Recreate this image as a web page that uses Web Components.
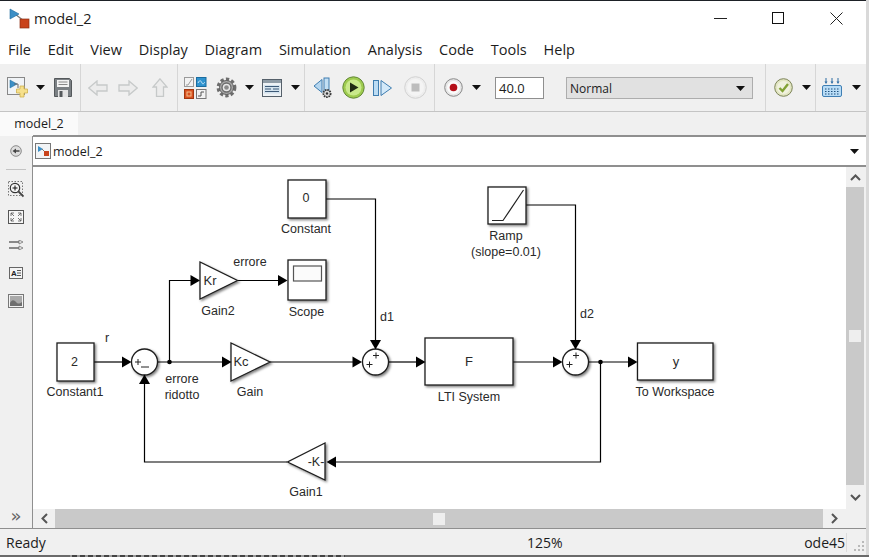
<!DOCTYPE html>
<html lang="en">
<head>
<meta charset="utf-8">
<title>model_2</title>
<style>
  * { box-sizing: border-box; }
  html, body { margin: 0; height: 100%; }
  body { width: 869px; height: 557px; overflow: hidden; background: #d9d9d9; font-family: "Open Sans", "Noto Sans", sans-serif; color: #1c1c1c; }
</style>
</head>
<body>
<sl-window>
  <sl-titlebar title-text="model_2"></sl-titlebar>
  <sl-menubar>
    <span>File</span><span>Edit</span><span>View</span><span>Display</span><span>Diagram</span><span>Simulation</span><span>Analysis</span><span>Code</span><span>Tools</span><span>Help</span>
  </sl-menubar>
  <sl-toolbar>
    <tb-group w="81" pad="4">
      <tb-btn w="26" icon="new"></tb-btn><tb-btn w="20" icon="caret"></tb-btn><tb-btn w="26" icon="save"></tb-btn>
    </tb-group>
    <tb-group w="97" pad="2">
      <tb-btn w="30" icon="back"></tb-btn><tb-btn w="30" icon="fwd"></tb-btn><tb-btn w="34" icon="up"></tb-btn>
    </tb-group>
    <tb-group w="127">
      <tb-btn w="34" icon="library"></tb-btn><tb-btn w="28" icon="gear"></tb-btn><tb-btn w="18" icon="caret"></tb-btn><tb-btn w="28" icon="explorer"></tb-btn><tb-btn w="18" icon="caret"></tb-btn>
    </tb-group>
    <tb-group w="130">
      <tb-btn w="36" icon="stepback"></tb-btn><tb-btn w="24" icon="play"></tb-btn><tb-btn w="36" icon="stepfwd"></tb-btn><tb-btn w="28" icon="stop"></tb-btn>
    </tb-group>
    <tb-group w="331">
      <tb-btn w="36" icon="record"></tb-btn><tb-btn w="10" icon="caret"></tb-btn>
      <tb-field value="40.0"></tb-field>
      <tb-select value="Normal"></tb-select>
    </tb-group>
    <tb-group w="50">
      <tb-btn w="34" icon="check"></tb-btn><tb-btn w="12" icon="caret"></tb-btn>
    </tb-group>
    <tb-group w="50" last>
      <tb-btn w="32" icon="keyboard"></tb-btn><tb-btn w="16" icon="caret"></tb-btn>
    </tb-group>
  </sl-toolbar>
  <sl-tabs label="model_2"></sl-tabs>
  <sl-workspace>
    <sl-palette></sl-palette>
    <sl-editor></sl-editor>
  </sl-workspace>
  <sl-status></sl-status>
</sl-window>
<sl-desktop-strip></sl-desktop-strip>

<script>
  const ICONS = {
    caret: [9, 5, '<path d="M0 0h9L4.500 5z" fill="#111"/>'],
    model: [21, 21, '<path d="M6 6 L15 13" stroke="#777" stroke-width="1.200" fill="none"/><path d="M1 1v10l9-5z" fill="#3c8fc6" stroke="#1f6c9f" stroke-width=".6"/><rect x="11" y="11" width="9" height="9" fill="#c9431b" stroke="#8e2f12" stroke-width=".7"/>'],
    modelsmall: [16, 16, '<rect x=".5" y=".5" width="15" height="15" fill="#f2f4f6" stroke="#777"/><path d="M3 3v6l5-3z" fill="#3c8fc6"/><path d="M7 6l3 3" stroke="#777"/><rect x="9" y="8" width="5" height="5" fill="#c9431b"/>'],
    new: [21, 21, '<rect x=".5" y=".5" width="17" height="17" fill="#f0f3f6" stroke="#888"/><path d="M3 3v8l7-4z" fill="#3c8fc6" stroke="#1f6c9f" stroke-width=".5"/><path d="M7 7h4v4" stroke="#666" fill="none"/><path d="M13 9h4v3h3.500v4H17v4h-4v-4H9.500v-4H13z" fill="#f6e08c" stroke="#d1b24e" stroke-width=".8"/>'],
    save: [18, 19, '<path d="M.5.5h15l2 2v16H.5z" fill="#7b8084" stroke="#54585b"/><rect x="3" y="2" width="12" height="7" fill="#f3f3f3"/><path d="M4.500 4h9M4.500 6.500h9" stroke="#888"/><rect x="4" y="12" width="10" height="7" fill="#e4e4e4"/><rect x="5.500" y="13" width="3" height="6" fill="#55595c"/>'],
    back: [20, 16, '<path d="M.8 8L9 1v4h10v6H9v4z" fill="#ececec" stroke="#c6c9c9" stroke-width="1.300"/>'],
    fwd: [20, 16, '<path d="M19.200 8L11 1v4H1v6h10v4z" fill="#ececec" stroke="#c6c9c9" stroke-width="1.300"/>'],
    up: [16, 19, '<path d="M8 .8L15 9h-3.500v9.500h-7V9H1z" fill="#ececec" stroke="#c6c9c9" stroke-width="1.300"/>'],
    library: [23, 22, '<rect x=".5" y=".5" width="9" height="9" fill="#f2f2f2" stroke="#9a9a9a"/><path d="M2 8h2l4-6" stroke="#9a9a9a" fill="none"/><rect x="12.500" y=".5" width="9.500" height="9" fill="#2f93cf" stroke="#1a6c9f"/><path d="M14 6c2-4 3-2 4 0s2 0 3-1" stroke="#c9e6f7" fill="none"/><rect x=".5" y="12.500" width="9" height="9" fill="#d8501f" stroke="#a03810"/><rect x="3" y="15" width="4" height="4" fill="none" stroke="#f3c08e"/><rect x="12.500" y="12.500" width="9.500" height="9" fill="#f2f2f2" stroke="#777"/><path d="M14 19h3v-4h3" stroke="#555" fill="none"/>'],
    gear: [21, 21, '<circle cx="10.500" cy="10.500" r="8.200" fill="none" stroke="#6d6d6d" stroke-width="3.400" stroke-dasharray="3.200 2.200"/><circle cx="10.500" cy="10.500" r="7" fill="#a9a9a9" stroke="#5f5f5f"/><circle cx="10.500" cy="10.500" r="4.500" fill="#e9e9e9" stroke="#6d6d6d" stroke-width="1.400"/><circle cx="10.500" cy="10.500" r="2.300" fill="#8b8b8b"/>'],
    explorer: [20, 18, '<rect x=".5" y=".5" width="19" height="17" fill="#eef2f5" stroke="#55606a"/><rect x="1" y="1" width="18" height="3" fill="#8f9ca6"/><rect x="2" y="6" width="16" height="8.500" fill="#3c8fc6" opacity=".14"/><path d="M3 7.500h14M3 10h6m2 0h6M3 12.500h14" stroke="#3d5a78"/>'],
    stepback: [20, 22, '<path d="M9 2.500v13L1 9z" fill="#b5d6ef" stroke="#3e7db0"/><rect x="11" y="1" width="5" height="15" fill="#c2dff4" stroke="#3e7db0"/><circle cx="14" cy="16.500" r="3.600" fill="#ddd" stroke="#333" stroke-width="1.800" stroke-dasharray="1.600 .8"/><circle cx="14" cy="16.500" r="1.200" fill="#333"/>'],
    play: [23, 23, '<circle cx="11.500" cy="11.500" r="10.700" fill="#9ecb4f" stroke="#64883a"/><circle cx="11.500" cy="11.500" r="8" fill="#c9e98b"/><path d="M8 6.500v10l8.500-5z" fill="#1f2a12"/>'],
    stepfwd: [20, 18, '<rect x=".5" y="1.500" width="5" height="15" fill="#bcdcf3" stroke="#3e7db0"/><path d="M8 1.500v15L18.500 9z" fill="#d3e9f9" stroke="#3e7db0"/>'],
    stop: [23, 23, '<circle cx="11.500" cy="11.500" r="10.800" fill="#ededed" stroke="#d2d2d2"/><circle cx="11.500" cy="11.500" r="8.500" fill="#f4f4f4"/><rect x="7.500" y="7.500" width="8" height="8" fill="#bdbdbd"/>'],
    record: [19, 19, '<circle cx="9.500" cy="9.500" r="8.800" fill="#e7e7e7" stroke="#8a8a8a"/><circle cx="9.500" cy="9.500" r="6.500" fill="#fafafa"/><circle cx="9.500" cy="9.500" r="3.800" fill="#b5101a"/>'],
    check: [19, 19, '<circle cx="9.500" cy="9.500" r="8.800" fill="#e2e6c2" stroke="#7d8458"/><circle cx="9.500" cy="9.500" r="6.500" fill="#f0f1de"/><path d="M5.500 10l3 3L14 6" stroke="#82a234" stroke-width="2.400" fill="none"/>'],
    keyboard: [20, 19, '<path d="M4 0v4M10 0v4M16 0v4" stroke="#2d6ca3"/><path d="M2.500 3.500h3L4 6zM8.500 3.500h3L10 6zM14.500 3.500h3L16 6z" fill="#2d6ca3"/><rect x=".5" y="7.500" width="19" height="11" rx="1.500" fill="#b8dcf6" stroke="#3f7fb4"/><path d="M3 11h14M3 13.500h14M3 16h14" stroke="#1d4f7c" stroke-dasharray="1.500 1.500"/>'],
    navback: [12, 12, '<circle cx="6" cy="6" r="5.300" fill="#ddd" stroke="#8a8a8a"/><path d="M2.500 6L6 3.500v1.800h3.500v1.400H6v1.800z" fill="#444"/>'],
    zoom: [16, 17, '<rect x=".5" y=".5" width="14" height="14" fill="none" stroke="#777" stroke-dasharray="1.500 1.500"/><circle cx="7" cy="7" r="4.700" fill="#f7f7f7" stroke="#333" stroke-width="1.200"/><path d="M4.500 7h5M7 4.500v5" stroke="#111"/><path d="M10.500 10.500L15.500 15.500" stroke="#444" stroke-width="1.800"/>'],
    fit: [16, 14, '<rect x=".5" y=".5" width="15" height="13" fill="#f6f6f6" stroke="#555" stroke-width="1"/><path d="M3 6V3h3M13 6V3h-3M3 8v3h3M13 8v3h-3M3 3l3 3M13 3l-3 3M3 11l3-3M13 11l-3-3" stroke="#555" fill="none" stroke-width=".8"/>'],
    route: [15, 10, '<path d="M0 2h10M0 8h10" stroke="#222"/><path d="M10 0v4l4-2zM10 6v4l4-2z" fill="#eee" stroke="#666" stroke-width=".7"/>'],
    annot: [14, 12, '<rect x=".5" y=".5" width="13" height="11" fill="#f4f4f4" stroke="#666"/><text x="2" y="9" font-family="Liberation Sans, sans-serif" font-size="8" font-weight="700" fill="#222">A</text><path d="M8 3.500h4M8 6h4M8 8.500h4" stroke="#555"/>'],
    image: [16, 14, '<rect x=".5" y=".5" width="15" height="13" fill="#f2f2f2" stroke="#777"/><path d="M2 2h12v10H2z" fill="#a9a9a9"/><path d="M2 9c2-4 4-3 6-1s3 2 6 0v4H2z" fill="#6f6f6f"/>'],
    grip: [10, 10, '<path d="M8 0h2v2H8zM4 4h2v2H4zM8 4h2v2H8zM0 8h2v2H0zM4 8h2v2H4zM8 8h2v2H8z" fill="#b9b9b9"/>'],
    chevup: [11, 7, '<path d="M1 6l4.500-4.500L10 6" fill="none" stroke="#555" stroke-width="2"/>'],
    chevdown: [11, 7, '<path d="M1 1l4.500 4.500L10 1" fill="none" stroke="#555" stroke-width="2"/>'],
    chevleft: [7, 11, '<path d="M6 1L1.500 5.500 6 10" fill="none" stroke="#555" stroke-width="2"/>'],
    chevright: [7, 11, '<path d="M1 1l4.500 4.500L1 10" fill="none" stroke="#555" stroke-width="2"/>']
  };

  // shadow root helper, every element below is just css + markup
  function comp(name, css, html, init) {
    customElements.define(name, class extends HTMLElement {
      constructor() {
        super();
        const root = this.attachShadow({ mode: 'open' });
        const body = typeof html === 'function' ? html(this) : html;
        root.innerHTML = '<style>*{box-sizing:border-box}' + css + '</style>' + body;
        if (init) init(this, root);
      }
    });
  }

  comp('sl-icon', ':host{display:inline-flex;line-height:0}', el => {
    const ic = ICONS[el.getAttribute('name')];
    return `<svg width="${ic[0]}" height="${ic[1]}" viewBox="0 0 ${ic[0]} ${ic[1]}">${ic[2]}</svg>`;
  });

  comp('sl-window', `
    :host{display:flex;flex-direction:column;width:866px;height:555px;background:#f0f0f0;border-top:1px solid #1d2126}
  `, '<slot></slot>');

  comp('sl-titlebar', `
    :host{display:flex;align-items:center;height:36px;background:#fff;padding:0 0 2px 9px;font-size:14.500px;flex:none}
    .name{margin-left:4px;flex:1}
    .ctl{width:58px;display:flex;justify-content:center;align-items:center;height:34px}
    .ctls{display:flex;margin-right:1px}
  `, el => `
    <sl-icon name="model"></sl-icon><span class="name">${el.getAttribute('title-text')}</span>
    <div class="ctls">
      <div class="ctl"><svg width="13" height="13"><path d="M0 6.500h13" stroke="#222"/></svg></div>
      <div class="ctl"><svg width="12" height="12"><rect x=".5" y=".5" width="11" height="11" fill="none" stroke="#111"/></svg></div>
      <div class="ctl"><svg width="13" height="13"><path d="M.5.500l12 12M12.500.500l-12 12" stroke="#222"/></svg></div>
    </div>`);

  comp('sl-menubar', `
    :host{display:flex;align-items:center;gap:16.800px;height:27px;background:#fff;padding:0 0 2px 8px;font-size:14.500px;flex:none}
  `, '<slot></slot>');

  comp('sl-toolbar', `
    :host{display:flex;height:48px;background:#f0f0f0;border-bottom:1px solid #c4c4c4;flex:none}
  `, '<slot></slot>');

  comp('tb-group', `
    :host{display:flex;align-items:center;flex:none;height:47px;border-right:1px solid #d6d6d6}
    :host([last]){border-right:0}
  `, '<slot></slot>', el => {
    el.style.width = el.getAttribute('w') + 'px';
    el.style.paddingLeft = (el.getAttribute('pad') || 0) + 'px';
  });

  comp('tb-btn', ':host{display:flex;align-items:center;justify-content:center;flex:none;height:47px}', el =>
    `<sl-icon name="${el.getAttribute('icon')}"></sl-icon>`,
    el => { el.style.width = el.getAttribute('w') + 'px'; });

  comp('tb-field', `
    :host{display:block;flex:none;width:49px;height:22px;margin-left:14px;background:#fff;border:1px solid #8f8f8f;
      font-size:13px;line-height:20px;padding-left:3px}
  `, el => el.getAttribute('value'));

  comp('tb-select', `
    :host{display:flex;align-items:center;justify-content:space-between;flex:none;width:187px;height:22px;margin-left:22px;
      background:#e1e1e1;border:1px solid #adadad;font-size:12px;line-height:21px;padding:1px 7px 0 3px}
  `, el => `<span>${el.getAttribute('value')}</span><sl-icon name="caret"></sl-icon>`);

  comp('sl-tabs', `
    :host{display:flex;height:24px;background:#f0f0f0;flex:none}
    .tab{width:78px;background:#fafafa;font-size:12.500px;text-align:center;line-height:24px;height:24px}
  `, el => `<div class="tab">${el.getAttribute('label')}</div>`);

  comp('sl-workspace', ':host{display:flex;height:392px;flex:none}', '<slot></slot>');

  comp('sl-palette', `
    :host{display:flex;flex-direction:column;align-items:center;width:33px;flex:none;background:#f0f0f0;border-right:1px solid #8f8f8f}
    .nav{height:30px;display:flex;align-items:center;justify-content:center}
    hr{width:20px;height:1px;margin:3px 0 5px;border:0;background:#c4c4c4}
    .it{height:28px;display:flex;align-items:center;justify-content:center}
    .sp{flex:1}
    .more{height:24px;font:18px/24px "DejaVu Sans",sans-serif;color:#666}
  `, `
    <div class="nav"><sl-icon name="navback"></sl-icon></div>
    <hr>
    <div class="it"><sl-icon name="zoom"></sl-icon></div>
    <div class="it"><sl-icon name="fit"></sl-icon></div>
    <div class="it"><sl-icon name="route"></sl-icon></div>
    <div class="it"><sl-icon name="annot"></sl-icon></div>
    <div class="it"><sl-icon name="image"></sl-icon></div>
    <div class="sp"></div>
    <div class="more">»</div>`);

  comp('sl-editor', `
    :host{display:flex;flex-direction:column;flex:1;min-width:0}
    .addr{display:flex;align-items:center;height:32px;flex:none;background:#fff;border-top:2px solid #8f8f8f;border-bottom:2px solid #8f8f8f;
      padding:0 7px 0 2px;font-size:12.500px;margin-top:-1px}
    .addr span{margin-left:2px;flex:1}
    .grid{flex:1;display:grid;grid-template-columns:813px 20px;grid-template-rows:342px 1fr}
    .corner{background:#f0f0f0}
  `, `
    <div class="addr"><sl-icon name="modelsmall"></sl-icon><span>model_2</span><sl-icon name="caret"></sl-icon></div>
    <div class="grid">
      <sl-diagram></sl-diagram>
      <sl-scrollbar orient="v"></sl-scrollbar>
      <sl-scrollbar orient="h"></sl-scrollbar>
      <div class="corner"></div>
    </div>`);

  comp('sl-scrollbar', `
    :host{display:flex;background:#f0f0f0}
    :host([orient=v]){flex-direction:column;padding-right:2px}
    :host([orient=h]){flex-direction:row}
    .b{display:flex;align-items:center;justify-content:center;flex:none}
    :host([orient=v]) .b{height:20px}
    :host([orient=v]) .b.end{height:24px}
    :host([orient=h]) .b{width:22px}
    :host([orient=h]) .b.end{width:23px}
    .track{flex:1;background:#c9c9c9;display:flex;align-items:center;justify-content:center}
    .thumb{width:12px;height:12px;background:#eeeeee}
  `, el => {
    const v = el.getAttribute('orient') === 'v';
    return `<div class="b"><sl-icon name="${v ? 'chevup' : 'chevleft'}"></sl-icon></div>
      <div class="track"><div class="thumb"></div></div>
      <div class="b end"><sl-icon name="${v ? 'chevdown' : 'chevright'}"></sl-icon></div>`;
  });

  // block diagram: page coordinates in the viewBox, so nodes are where the reference has them
  const wires = [
    'M94 362H123', 'M157 362H223', 'M169.500 362V280.500H192', 'M237 280.500H279', 'M270 362H354',
    'M326 199H375.500V341', 'M388 362H417', 'M513 362H554', 'M526 205H575.500V341', 'M588 362H629',
    'M600.500 362V462H335', 'M287 462H144.500V384'
  ];
  const heads = [
    'M122 356.500v11l9.500-5.500z', 'M222 356.500v11l9.500-5.500z', 'M190.500 275v11l9.500-5.500z', 'M278 275v11l9.500-5.500z',
    'M352.500 356.500v11l9.500-5.500z', 'M416 356.500v11l9.500-5.500z', 'M553 356.500v11l9.500-5.500z', 'M628 356.500v11l9.500-5.500z',
    'M370 340h11l-5.500 9.500z', 'M570 340h11l-5.500 9.500z', 'M336 456.500v11l-9.500-5.500z', 'M139 384h11l-5.500-9.500z'
  ];
  const boxes = [[57, 343, 37, 38], [288, 180, 38, 38], [288, 260, 38, 40], [488, 187, 38, 37], [425, 338, 88, 47], [637.500, 343, 75.500, 37]];
  const tris = ['200,262 200,299 237.500,280.500', '231,343 231,381 270,362', '325,443 325,480 287.500,462'];
  const sums = [[144.500, 362], [375.500, 362], [575.500, 362]];
  const labels = [
    [74.500, 366, '2', 12.500], [306, 202, '0', 12.500], [469, 366, 'F', 13], [676, 366, 'y', 13],
    [75, 396, 'Constant1'], [306, 233, 'Constant'], [306.500, 316, 'Scope'], [218, 315, 'Gain2'], [250, 396, 'Gain'],
    [250, 266, 'errore'], [182, 383, 'errore'], [182, 399, 'ridotto'], [107, 342, 'r'],
    [387, 321, 'd1'], [587, 318, 'd2'], [506, 240, 'Ramp'], [506, 256, '(slope=0.01)'], [469, 401, 'LTI System'],
    [675, 396, 'To Workspace'], [306, 496, 'Gain1'], [210, 285, 'Kr', 13], [241, 366, 'Kc', 13], [316, 466, '-K-', 12.500]
  ];

  comp('sl-diagram', `
    :host{display:block;background:#fff;overflow:hidden}
    svg{display:block}
    text{font-family:"Liberation Sans",Arial,sans-serif;font-size:12.500px;fill:#2a2a2a;text-anchor:middle}
    .b{fill:#fff;stroke:#1e1e1e;stroke-width:1.300;filter:url(#sh)}
    .w{fill:none;stroke:#000;stroke-width:1.200}
  `, () => `
    <svg width="813" height="342" viewBox="33 167 813 342">
      <defs><filter id="sh" x="-20%" y="-20%" width="150%" height="150%"><feDropShadow dx="1.500" dy="1.500" stdDeviation="1" flood-color="#000" flood-opacity=".5"/></filter></defs>
      ${wires.map(d => `<path class="w" d="${d}"/>`).join('')}
      ${boxes.map(b => `<rect class="b" x="${b[0]}" y="${b[1]}" width="${b[2]}" height="${b[3]}"/>`).join('')}
      ${tris.map(p => `<polygon class="b" points="${p}"/>`).join('')}
      ${sums.map(s => `<circle class="b" cx="${s[0]}" cy="${s[1]}" r="13"/>`).join('')}
      ${heads.map(d => `<path d="${d}" fill="#000"/>`).join('')}
      <circle cx="169.500" cy="362" r="2.300"/><circle cx="600.500" cy="362" r="2.300"/>
      <rect x="293.500" y="266" width="28" height="15" fill="#fbfbfb" stroke="#555" stroke-width="1.200"/>
      <path d="M492 220.500h11L523.500 190" fill="none" stroke="#222" stroke-width="1.200"/>
      <path d="M135 362h6M138 359v6M141 367h8" stroke="#222" fill="none"/>
      <path d="M366.500 364.500h6M369.500 361.500v6M373 355.500h6M376 352.500v6" stroke="#222" fill="none"/>
      <path d="M566.500 364.500h6M569.500 361.500v6M573 355.500h6M576 352.500v6" stroke="#222" fill="none"/>
      ${labels.map(l => `<text x="${l[0]}" y="${l[1]}"${l[3] ? ` style="font-size:${l[3]}px"` : ''}>${l[2]}</text>`).join('')}
    </svg>`);

  comp('sl-status', `
    :host{display:flex;align-items:center;height:27px;flex:none;background:#f0f0f0;border-top:1px solid #8f8f8f;font-size:14px;padding:0 2px 0 6px}
    .l{width:521px}
    .m{flex:1}
    .r{border-right:1px solid #dcdcdc;padding-right:1px}
    .g{margin:8px 0 0 7px;line-height:0}
  `, `<span class="l">Ready</span><span class="m">125%</span><span class="r">ode45</span><span class="g"><sl-icon name="grip"></sl-icon></span>`);

  comp('sl-desktop-strip', `
    :host{display:block;width:869px;height:2px;background:linear-gradient(90deg,#6a6a6a 0 70px,transparent 70px 345px,#6a6a6a 345px),repeating-linear-gradient(90deg,#444 0 5px,#9a9a9a 5px 8px)}
  `, '');
</script>
</body>
</html>
